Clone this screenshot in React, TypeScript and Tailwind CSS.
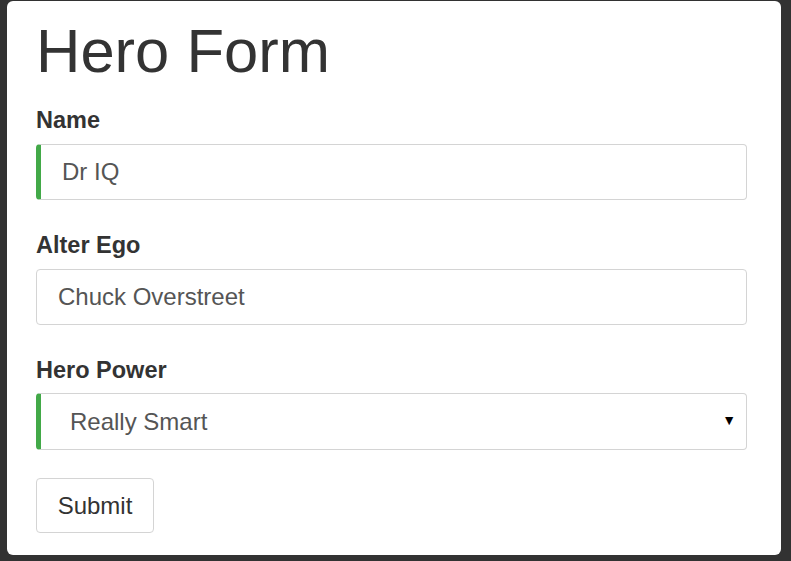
export default function App() {
  const field =
    "block w-full h-[56px] rounded-[4px] border border-[#d4d4d4] bg-white pl-[21px] text-[24px] text-[#555] outline-none";
  const label = "block text-[23.5px] leading-[30px] font-bold text-[#333] mb-[9px]";
  return (
    <div className="w-[791px] h-[561px] bg-[#323232] pt-[1px] pl-[7px] font-['Liberation_Sans',Arial,sans-serif]">
      <div className="w-[774px] h-[554px] bg-white rounded-[6px] pt-[16px] px-[29px]">
        <h1 className="text-[61.5px] leading-[67px] text-[#333] mb-[21px]">Hero Form</h1>
        <form className="w-[711px]" onSubmit={(e) => e.preventDefault()}>
          <div className="mb-[30px]">
            <label className={label}>Name</label>
            <input className={`${field} border-l-[5px] border-l-[#42a948] pl-[17px]`} defaultValue="Dr IQ" />
          </div>
          <div className="mb-[30px]">
            <label className={label}>Alter Ego</label>
            <input className={field} defaultValue="Chuck Overstreet" />
          </div>
          <div className="mb-[28px]">
            <label className={label}>Hero Power</label>
            <div className="relative">
              <select
                className={`${field} appearance-none border-l-[5px] border-l-[#42a948] pl-[29px] h-[57px] -mt-[1px]`}
                defaultValue="Really Smart"
              >
                <option>Really Smart</option>
                <option>Super Flexible</option>
                <option>Super Hot</option>
                <option>Weather Changer</option>
              </select>
              <span className="pointer-events-none absolute right-[11px] top-[17px] text-[14px] text-black">▼</span>
            </div>
          </div>
          <button
            type="submit"
            className="w-[118px] h-[55px] rounded-[4px] border border-[#d4d4d4] bg-white text-[24px] text-[#333]"
          >
            Submit
          </button>
        </form>
      </div>
    </div>
  );
}
